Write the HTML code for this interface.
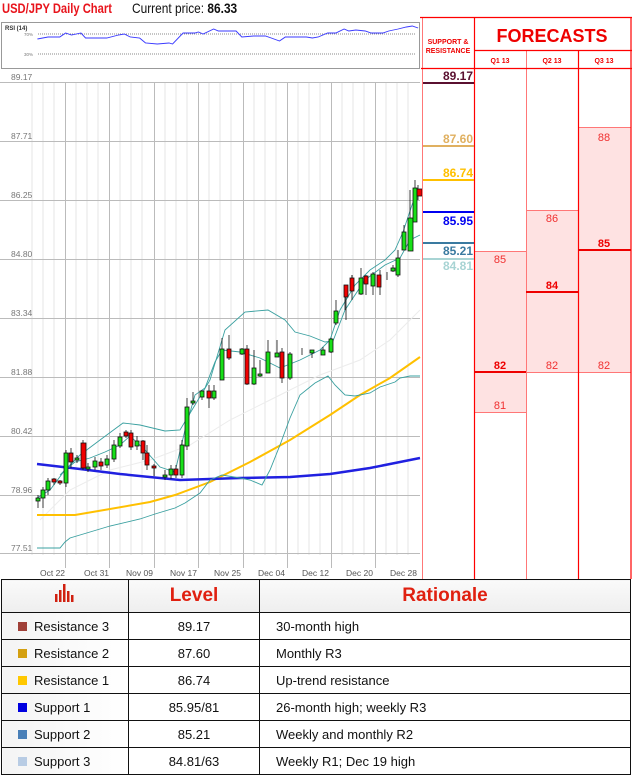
<!DOCTYPE html>
<html><head><meta charset="utf-8"><style>
body{margin:0;width:632px;height:779px;background:#fff;overflow:hidden;position:relative;font-family:"Liberation Sans",sans-serif}
.a{position:absolute}
table{border-collapse:collapse;position:absolute;left:1px;top:579px;width:630px;table-layout:fixed}
td{border:1.5px solid #111;height:26px;font-size:13px;color:#111;padding:0;white-space:nowrap;overflow:hidden}
tr.h td{height:32px;background:linear-gradient(#fafafa,#eee);color:#e02010;font-weight:bold;font-size:19px;text-align:center}
td.c1{padding-left:16px;background:linear-gradient(90deg,#f4f4f4,#fff)}
td.c2{text-align:center}
td.c3{padding-left:16px}
.sq{display:inline-block;width:9px;height:9px;margin-right:7px;vertical-align:0}
</style></head><body>
<div class="a" style="left:2px;top:0px;font-size:14px;color:#e8141c;font-weight:bold;transform:scaleX(0.8);transform-origin:0 0;white-space:nowrap">USD/JPY Daily Chart</div>
<div class="a" style="left:132px;top:0px;font-size:14px;color:#111;transform:scaleX(0.85);transform-origin:0 0;white-space:nowrap">Current price: <b>86.33</b></div>
<svg class="a" style="left:0;top:0" width="632" height="579">
<rect x="1.5" y="22.5" width="418" height="46" fill="#fff" stroke="#999"/>
<text x="5" y="30" font-size="6" fill="#333" font-family="Liberation Sans" font-weight="bold">RSI (14)</text>
<text x="24" y="36" font-size="4.5" fill="#777">70%</text><text x="24" y="56" font-size="4.5" fill="#777">30%</text>
<line x1="38" y1="34" x2="416" y2="34" stroke="#888" stroke-dasharray="1,1"/>
<line x1="38" y1="54" x2="416" y2="54" stroke="#888" stroke-dasharray="1,1"/>
<polyline transform="translate(1,0) scale(1.175,1)" fill="none" stroke="#3a3aff" stroke-width="0.9" points="31,39 40,37 50,37 55,33 60,35 68,33 72,38 90,38 100,35 105,34 110,37 118,38 123,43 133,44 143,43 146,44 155,33 165,33 168,32 172,34 181,29 185,31 200,31 205,37 215,36 225,36 230,38 237,41 242,37 260,37 265,38 270,37 278,33 285,33 292,29 296,31 302,30 310,31 315,33 325,33 330,31 338,29 345,27 350,26 355,28"/>
<g stroke="#e4e4e4" stroke-width="1">
<line x1="32" y1="82" x2="32" y2="555"/><line x1="43" y1="82" x2="43" y2="555"/><line x1="54" y1="82" x2="54" y2="555"/>
<line x1="76" y1="82" x2="76" y2="555"/><line x1="87" y1="82" x2="87" y2="555"/><line x1="98" y1="82" x2="98" y2="555"/>
<line x1="120" y1="82" x2="120" y2="555"/><line x1="131" y1="82" x2="131" y2="555"/><line x1="142" y1="82" x2="142" y2="555"/>
<line x1="165" y1="82" x2="165" y2="555"/><line x1="176" y1="82" x2="176" y2="555"/><line x1="187" y1="82" x2="187" y2="555"/>
<line x1="209" y1="82" x2="209" y2="555"/><line x1="220" y1="82" x2="220" y2="555"/><line x1="231" y1="82" x2="231" y2="555"/>
<line x1="254" y1="82" x2="254" y2="555"/><line x1="265" y1="82" x2="265" y2="555"/><line x1="276" y1="82" x2="276" y2="555"/>
<line x1="298" y1="82" x2="298" y2="555"/><line x1="309" y1="82" x2="309" y2="555"/><line x1="320" y1="82" x2="320" y2="555"/>
<line x1="342" y1="82" x2="342" y2="555"/><line x1="353" y1="82" x2="353" y2="555"/><line x1="364" y1="82" x2="364" y2="555"/>
<line x1="386" y1="82" x2="386" y2="555"/><line x1="397" y1="82" x2="397" y2="555"/><line x1="408" y1="82" x2="408" y2="555"/>
</g>
<g stroke="#bbb" stroke-width="1">
<line x1="65.5" y1="82" x2="65.5" y2="568"/><line x1="109.5" y1="82" x2="109.5" y2="568"/><line x1="154.5" y1="82" x2="154.5" y2="568"/><line x1="198.5" y1="82" x2="198.5" y2="568"/><line x1="243.5" y1="82" x2="243.5" y2="568"/><line x1="287.5" y1="82" x2="287.5" y2="568"/><line x1="331.5" y1="82" x2="331.5" y2="568"/><line x1="375.5" y1="82" x2="375.5" y2="568"/>
<line x1="0" y1="82.5" x2="420" y2="82.5"/><line x1="0" y1="141.5" x2="420" y2="141.5"/><line x1="0" y1="200.5" x2="420" y2="200.5"/><line x1="0" y1="259.5" x2="420" y2="259.5"/><line x1="0" y1="318.5" x2="420" y2="318.5"/><line x1="0" y1="377.5" x2="420" y2="377.5"/><line x1="0" y1="436.5" x2="420" y2="436.5"/><line x1="0" y1="495.5" x2="420" y2="495.5"/><line x1="0" y1="553.5" x2="420" y2="553.5"/>
</g>
<g font-size="8.5" fill="#777" font-family="Liberation Sans">
<text x="11" y="80">89.17</text><text x="11" y="139">87.71</text><text x="11" y="198">86.25</text><text x="11" y="257">84.80</text><text x="11" y="316">83.34</text><text x="11" y="375">81.88</text><text x="11" y="434">80.42</text><text x="11" y="493">78.96</text><text x="11" y="551">77.51</text>
<g fill="#555"><text x="40" y="576">Oct 22</text><text x="84" y="576">Oct 31</text><text x="126" y="576">Nov 09</text><text x="170" y="576">Nov 17</text><text x="214" y="576">Nov 25</text><text x="258" y="576">Dec 04</text><text x="302" y="576">Dec 12</text><text x="346" y="576">Dec 20</text><text x="390" y="576">Dec 28</text></g>
</g>
<polyline fill="none" stroke="#ececec" stroke-width="1" points="40,520 70,490 110,470 150,460 190,445 230,420 270,400 320,375 360,360 390,340 420,310"/>
<polyline fill="none" stroke="#ffc000" stroke-width="2" points="37,515 75,515 110,509 150,502 175,495 210,482 250,462 290,440 330,415 360,395 390,378 420,357"/>
<polyline fill="none" stroke="#2020e0" stroke-width="2.5" points="37,464 80,469 120,474 180,480 240,478 290,477 330,474 370,468 400,462 420,458"/>
<polyline fill="none" stroke="#3aa0a0" stroke-width="0.9" points="37,548 60,548 65,542 70,538 90,532 110,526 140,519 155,514 175,508 185,503 200,493 210,480 222,475 240,478 250,480 262,485 270,470 280,445 290,418 300,395 315,383 328,376 335,385 345,395 355,396 370,393 380,387 395,382 400,378 410,376 420,376"/>
<polyline fill="none" stroke="#3aa0a0" stroke-width="0.9" points="60,475 80,455 100,440 123,423 140,425 165,431 180,430 195,405 210,380 225,330 245,312 268,310 285,320 295,332 310,336 325,342 333,341 345,310 365,280 385,265 400,258 410,240 420,235"/>
<polyline fill="none" stroke="#3aa0a0" stroke-width="0.9" points="37,498 50,490 65,470 75,462 90,458 105,452 120,445 130,436 145,450 160,467 175,472 185,430 195,395 205,388 215,362 222,350 240,352 260,358 280,368 300,360 320,350 330,340 340,310 355,285 370,270 385,260 395,250 403,232 412,205 418,190"/>
<g stroke="#111" stroke-width="0.8">
<g fill="#18e018">
<path d="M38 495V508M43 487V508M48 478V495M66 450V487M77 455V463M88 463V472M95 457V470M107 455V468M114 440V462M120 433V448M137 436V450M165 470V480M171 465V479M182 440V478M187 398V450M193 392V405M202 390V400M214 385V400M222 338V380M242 348V355M254 350V385M260 360V377M268 340V373M277 340V357M290 352V380M302 348V355M312 352V358M323 347V355M331 338V353M336 300V325M345 295V310M352 275V290M361 268V295M373 272V295M387 272V280M393 265V272M398 250V277M404 225V250M410 190V235M415 180V220"/>
<rect x="36" y="498" width="4" height="3"/><rect x="41" y="490" width="4" height="8"/><rect x="46" y="481" width="4" height="9"/><rect x="64" y="453" width="4" height="30"/><rect x="75" y="458" width="4" height="2"/><rect x="86" y="467" width="4" height="2"/><rect x="93" y="461" width="4" height="6"/><rect x="105" y="459" width="4" height="6"/><rect x="112" y="445" width="4" height="14"/><rect x="118" y="437" width="4" height="9"/><rect x="135" y="441" width="4" height="5"/><rect x="163" y="475" width="4" height="2"/><rect x="169" y="469" width="4" height="6"/><rect x="180" y="445" width="4" height="30"/><rect x="185" y="407" width="4" height="39"/><rect x="191" y="401" width="4" height="2"/><rect x="200" y="391" width="4" height="6"/><rect x="212" y="391" width="4" height="7"/><rect x="220" y="349" width="4" height="31"/><rect x="240" y="349" width="4" height="5"/><rect x="252" y="368" width="4" height="16"/><rect x="258" y="374" width="4" height="2"/><rect x="266" y="352" width="4" height="21"/><rect x="275" y="353" width="4" height="4"/><rect x="288" y="354" width="4" height="24"/><rect x="310" y="350" width="4" height="3"/><rect x="321" y="350" width="4" height="5"/><rect x="329" y="339" width="4" height="13"/><rect x="334" y="311" width="4" height="12"/><rect x="359" y="278" width="4" height="16"/><rect x="371" y="274" width="4" height="12"/><rect x="391" y="268" width="4" height="3"/><rect x="396" y="258" width="4" height="17"/><rect x="402" y="232" width="4" height="18"/><rect x="408" y="218" width="5" height="33"/><rect x="413" y="188" width="4" height="34"/>
</g>
<g fill="#f00000">
<path d="M54 478V485M60 480V485M71 448V468M83 440V470M101 458V470M126 430V438M131 430V450M143 440V460M147 445V470M154 464V476M176 465V478M209 385V408M229 335V360M247 345V385M282 348V383M346 295V320M352 275V300M366 275V295M380 270V295M418 185V200"/>
<rect x="52" y="479" width="4" height="3"/><rect x="58" y="481" width="4" height="2"/><rect x="69" y="453" width="4" height="9"/><rect x="81" y="443" width="5" height="25"/><rect x="99" y="462" width="4" height="4"/><rect x="124" y="432" width="4" height="4"/><rect x="129" y="433" width="4" height="14"/><rect x="141" y="441" width="4" height="12"/><rect x="145" y="453" width="4" height="12"/><rect x="152" y="466" width="4" height="2"/><rect x="174" y="469" width="4" height="6"/><rect x="207" y="391" width="4" height="7"/><rect x="227" y="349" width="4" height="9"/><rect x="245" y="349" width="4" height="35"/><rect x="280" y="352" width="4" height="26"/><rect x="344" y="285" width="4" height="12"/><rect x="350" y="278" width="4" height="13"/><rect x="364" y="276" width="4" height="8"/><rect x="377" y="275" width="4" height="12"/><rect x="417" y="189" width="5" height="7"/>
</g>
</g>
<rect x="578" y="127" width="53" height="245" fill="#fee2e2"/>
<rect x="526" y="210" width="52" height="162" fill="#fee2e2"/>
<rect x="474" y="251" width="52" height="161" fill="#fee2e2"/>
<g stroke="#f77" stroke-width="1">
<line x1="474" y1="251.5" x2="526" y2="251.5"/><line x1="474" y1="412.5" x2="526" y2="412.5"/><line x1="526" y1="372.5" x2="631" y2="372.5"/><line x1="526" y1="210.5" x2="578" y2="210.5"/>
<line x1="422.5" y1="17" x2="422.5" y2="579"/><line x1="526.5" y1="50" x2="526.5" y2="579"/><line x1="578" y1="127.5" x2="631" y2="127.5"/>
</g>
<g stroke="#f00" stroke-width="1.2">
<line x1="420" y1="17.5" x2="632" y2="17.5"/><line x1="474.5" y1="17" x2="474.5" y2="579"/><line x1="578.5" y1="50" x2="578.5" y2="579"/><line x1="631" y1="17" x2="631" y2="579"/>
<line x1="474" y1="50.5" x2="632" y2="50.5"/><line x1="474" y1="68.5" x2="632" y2="68.5"/><line x1="421" y1="68.5" x2="474" y2="68.5"/>
</g>
<g stroke-width="2"><line x1="474" y1="372" x2="526" y2="372" stroke="#e00"/><line x1="526" y1="292" x2="578" y2="292" stroke="#e00"/><line x1="578" y1="250" x2="631" y2="250" stroke="#e00"/>
<line x1="423" y1="83" x2="474" y2="83" stroke="#5a1030"/><line x1="423" y1="146" x2="474" y2="146" stroke="#e0b060"/><line x1="423" y1="180" x2="474" y2="180" stroke="#ffc000"/><line x1="423" y1="212" x2="474" y2="212" stroke="#0000f0"/><line x1="423" y1="243" x2="474" y2="243" stroke="#3a7aa0"/><line x1="423" y1="259" x2="474" y2="259" stroke="#a8d4d4"/></g>
<g font-family="Liberation Sans" text-anchor="end" font-size="12" font-weight="bold">
<text x="473" y="80" fill="#5a1030">89.17</text><text x="473" y="143" fill="#e0b060">87.60</text><text x="473" y="177" fill="#ffc000">86.74</text><text x="473" y="225" fill="#0000f0">85.95</text><text x="473" y="255" fill="#3a7aa0">85.21</text><text x="473" y="270" fill="#a8d4d4">84.81</text>
</g>
<g font-family="Liberation Sans" text-anchor="middle" fill="#f03030">
<text x="448" y="44" font-size="7" font-weight="bold" fill="#e00">SUPPORT &amp;</text><text x="448" y="53" font-size="7" font-weight="bold" fill="#e00">RESISTANCE</text>
<text x="552" y="42" font-size="18" font-weight="bold" fill="#e00">FORECASTS</text>
<text x="500" y="63" font-size="7" font-weight="bold" fill="#e00">Q1 13</text><text x="552" y="63" font-size="7" font-weight="bold" fill="#e00">Q2 13</text><text x="604" y="63" font-size="7" font-weight="bold" fill="#e00">Q3 13</text>
<g font-size="11"><text x="500" y="263">85</text><text x="500" y="369" font-weight="bold" fill="#e00">82</text><text x="500" y="409">81</text>
<text x="552" y="222">86</text><text x="552" y="289" font-weight="bold" fill="#e00">84</text><text x="552" y="369">82</text>
<text x="604" y="141">88</text><text x="604" y="247" font-weight="bold" fill="#e00">85</text><text x="604" y="369">82</text></g>
</g>
</svg>
<table>
<colgroup><col style="width:127px"><col style="width:131px"><col></colgroup>
<tr class="h"><td class="c1" style="padding:0;text-align:center"><svg width="22" height="18" viewBox="0 0 22 18"><g fill="#d02010"><rect x="1" y="10" width="2.5" height="8"/><rect x="5" y="6" width="2.5" height="12"/><rect x="9" y="0" width="2.5" height="18"/><rect x="13" y="7" width="2.5" height="11"/><rect x="17" y="11" width="2.5" height="7"/></g></svg></td><td class="c2">Level</td><td style="text-align:center">Rationale</td></tr>
<tr><td class="c1"><span class="sq" style="background:#a04038"></span>Resistance 3</td><td class="c2">89.17</td><td class="c3">30-month high</td></tr>
<tr><td class="c1"><span class="sq" style="background:#d4a010"></span>Resistance 2</td><td class="c2">87.60</td><td class="c3">Monthly R3</td></tr>
<tr><td class="c1"><span class="sq" style="background:#ffc800"></span>Resistance 1</td><td class="c2">86.74</td><td class="c3">Up-trend resistance</td></tr>
<tr><td class="c1"><span class="sq" style="background:#0000e0"></span>Support 1</td><td class="c2">85.95/81</td><td class="c3">26-month high; weekly R3</td></tr>
<tr><td class="c1"><span class="sq" style="background:#4a80b8"></span>Support 2</td><td class="c2">85.21</td><td class="c3">Weekly and monthly R2</td></tr>
<tr><td class="c1"><span class="sq" style="background:#b8cce4"></span>Support 3</td><td class="c2">84.81/63</td><td class="c3">Weekly R1; Dec 19 high</td></tr>
</table>
</body></html>
